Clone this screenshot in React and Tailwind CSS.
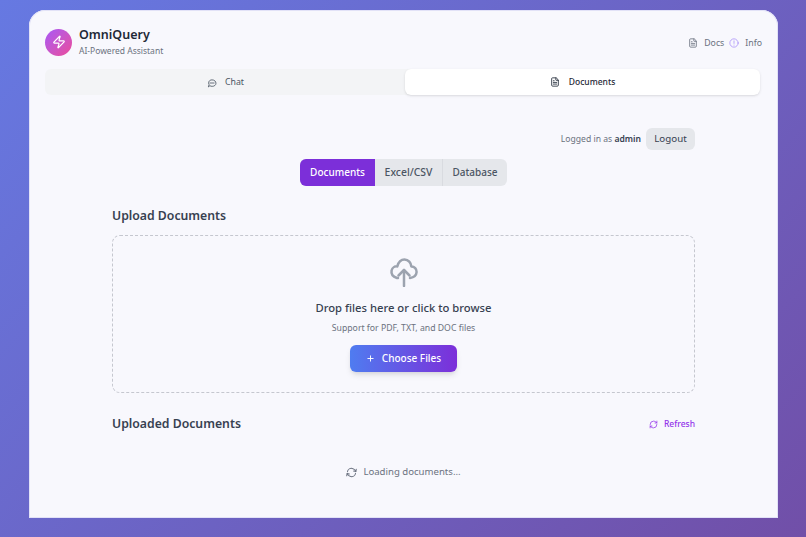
import { FileText, Plus, RefreshCw, Zap } from 'lucide-react';

function UploadCloud({ className }) {
  return (
    <svg viewBox="0 0 30 30" fill="none" stroke="currentColor" strokeWidth="2.5" strokeLinecap="round" strokeLinejoin="round" className={className}>
      <path d="M9 21 H8 C3.5 19.5 2 16.5 2.6 13.5 C3.3 10.5 6 9 8.3 9.4 C9.5 5 12.5 2.5 15.5 2.5 C19.5 2.5 22 6 22.3 9.4 C25.5 9.4 27.8 12 27.6 15 C27.4 18 25 20.5 21 21" />
      <path d="M15 29 V13" />
      <path d="M9.5 18.5 L15 13 L20.5 18.5" />
    </svg>
  );
}

function ChatBubble({ className }) {
  return (
    <svg viewBox="0 0 24 24" fill="none" stroke="currentColor" strokeWidth="2" strokeLinecap="round" strokeLinejoin="round" className={className}>
      <path d="M3.5 20.5 L5 16 C2 11 5 4.5 12 4.5 C18 4.5 21.5 8.5 21.5 12.5 C21.5 17 17.5 20 12.5 20 C10.5 20 9 19.7 7.8 19 Z" />
      <path d="M7 12 H17" />
    </svg>
  );
}

function InfoMark({ className }) {
  return (
    <svg viewBox="0 0 24 24" fill="none" stroke="currentColor" strokeWidth="1.8" strokeLinecap="round" className={className}>
      <circle cx="12" cy="12" r="10" />
      <path d="M12 7 V13" />
      <path d="M12 17 V17.2" />
    </svg>
  );
}

function App() {
  return (
    <div className="h-[537px] overflow-hidden bg-[linear-gradient(135deg,#6679e2,#714fa8)] pl-[29px] pt-[10px] font-['Noto_Sans',sans-serif]">
      <div className="h-[508px] w-[749px] overflow-hidden rounded-t-2xl bg-[#f8f8fd] shadow-[inset_0_0_0_1px_#e2e2f7]">
        {/* Header */}
        <div className="flex items-center justify-between pr-[16px] pl-4 pt-[17px]">
          <div className="flex items-center gap-[7px]">
            <div className="flex h-[27px] w-[27px] items-center justify-center rounded-full bg-gradient-to-br from-[#a855f7] to-[#ec4899] text-white">
              <Zap size={14} />
            </div>
            <div>
              <div className="text-[12.5px] leading-[16px] font-semibold text-[#1f2937]">OmniQuery</div>
              <div className="mt-px text-[8.5px] leading-[13px] text-[#6b7280]">AI-Powered Assistant</div>
            </div>
          </div>
          <div className="mt-[2px] flex items-center text-[8.75px] leading-[12px] text-[#6b7280]">
            <FileText size={10} className="mr-[6px]" />
            <span className="mr-[5px]">Docs</span>
            <InfoMark className="mr-[6px] h-[10px] w-[10px] text-[#a78bfa]" />
            <span>Info</span>
          </div>
        </div>

        {/* Main tabs */}
        <div className="mt-[12px] mr-[18px] ml-4 flex h-[26px] rounded-md bg-[#f3f4f6] text-[8.75px]">
          <div className="flex flex-1 items-center justify-center gap-[8px] pl-px text-[#4b5563]">
            <ChatBubble className="mt-px h-[10px] w-[10px]" />
            <span className="mt-px">Chat</span>
          </div>
          <div className="flex w-[355px] items-center justify-center gap-[9px] rounded-md bg-white text-[8.5px] font-medium text-[#1f2937] shadow-sm">
            <FileText size={10} />
            <span>Documents</span>
          </div>
        </div>

        <div className="mx-auto mt-[33px] w-[583px]">
          <div className="flex items-center justify-end gap-[5px]">
            <span className="text-[8.6px] text-[#6b7280]">
              Logged in as <span className="font-semibold text-[#374151]">admin</span>
            </span>
            <button className="h-[22px] w-[49px] rounded-md bg-[#e5e7eb] text-[9.75px] text-[#374151]">Logout</button>
          </div>

          <div className="mt-[9px] flex justify-center">
            <div className="flex h-[27px] overflow-hidden rounded-md bg-[#e5e7eb] text-[10px] font-medium text-[#4b5563]">
              <div className="flex w-[75px] items-center justify-center bg-[#7c2fd9] text-white">Documents</div>
              <div className="flex w-[68px] items-center justify-center border-r border-[#d9dbe0] text-[10.4px]">Excel/CSV</div>
              <div className="flex w-[64px] items-center justify-center">Database</div>
            </div>
          </div>

          <h2 className="mt-[21px] text-[12.25px] leading-[18px] font-semibold text-[#374151]">Upload Documents</h2>

          <div className="mt-[10px] flex h-[158px] flex-col items-center rounded-lg border border-dashed border-[#c5c7cf] pt-[21px]">
            <UploadCloud className="h-[30px] w-[30px] text-[#9ca3af]" />
            <div className="mt-[13px] text-[11.25px] leading-[16px] font-medium text-[#374151]">Drop files here or click to browse</div>
            <div className="mt-[6px] text-[8.7px] leading-[13px] text-[#6b7280]">Support for PDF, TXT, and DOC files</div>
            <button className="mt-[10px] flex h-[27px] w-[107px] items-center justify-center gap-[7px] rounded-md bg-[linear-gradient(90deg,#4f7cf0,#7c2fd9)] text-[10px] font-medium text-white shadow-md">
              <Plus size={9} strokeWidth={2.5} />
              Choose Files
            </button>
          </div>

          <div className="mt-[22px] flex items-center justify-between">
            <h2 className="text-[12.25px] leading-[18px] font-semibold text-[#374151]">Uploaded Documents</h2>
            <div className="flex items-center gap-[6px] text-[8.5px] font-medium text-[#9333ea]">
              <RefreshCw size={9} />
              Refresh
            </div>
          </div>

          <div className="mt-[32px] flex items-center justify-center gap-[6px] text-[9.6px] text-[#6b7280]">
            <RefreshCw size={11} strokeWidth={2.25} className="rotate-[10deg]" />
            Loading documents...
          </div>
        </div>
      </div>
    </div>
  );
}

export default App;
